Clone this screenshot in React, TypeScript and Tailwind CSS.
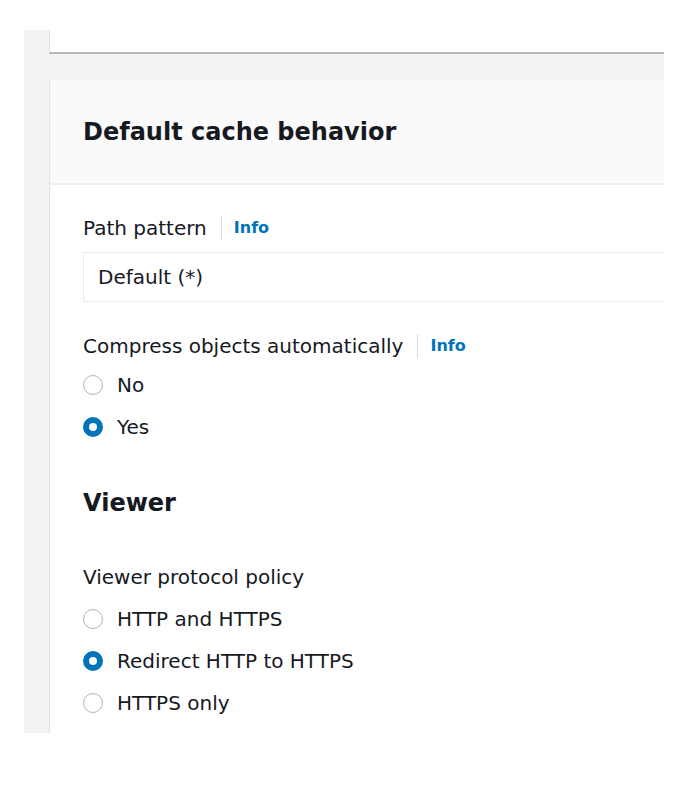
import React from 'react';

const font = { fontFamily: '"DejaVu Sans", "Liberation Sans", sans-serif' };

function Radio({ label, checked }: { label: string; checked?: boolean }) {
  return (
    <div className="flex items-center h-[24px]">
      <span
        className={
          checked
            ? 'w-[20px] h-[20px] rounded-full border-[6px] border-[#0073bb] bg-white shrink-0'
            : 'w-[20px] h-[20px] rounded-full border-[1.5px] border-[#aab7b8] bg-white shrink-0'
        }
      />
      <span className="ml-[14px] text-[20px] text-[#16191f]">{label}</span>
    </div>
  );
}

function FieldLabel({ text, info }: { text: string; info?: boolean }) {
  return (
    <div className="flex items-center h-[24px] text-[20px] text-[#16191f]">
      <span>{text}</span>
      {info && (
        <>
          <span className="ml-[14px] mr-[12px] w-px h-[24px] bg-[#d5dbdb]" />
          <span className="text-[16px] font-bold text-[#0073bb]">Info</span>
        </>
      )}
    </div>
  );
}

export default function App() {
  return (
    <div className="w-[696px] h-[802px] bg-white pt-[30px] pl-[24px] pr-[32px]" style={font}>
      <div className="h-[703px] bg-[#f2f3f3] pl-[25px] flex flex-col overflow-hidden">
        {/* previous card, cut off at the top */}
        <div className="h-[24px] bg-white border-l border-[#e3e5e5] border-b-2 border-b-[#b4b9b9]" />

        <div className="mt-[26px] flex-1 bg-white border-l border-[#e3e5e5] flex flex-col">
          <div className="h-[105px] bg-[#fafafa] border-b-2 border-[#eeeeee] flex items-center px-[33px]">
            <h2 className="text-[24px] font-bold text-[#16191f]">Default cache behavior</h2>
          </div>

          <div className="pl-[33px] pt-[31px] flex flex-col">
            <FieldLabel text="Path pattern" info />
            <div className="mt-[12px] h-[50px] border border-r-0 border-[#eaeded] flex items-center px-[14px] text-[20px] text-[#16191f]">
              Default (*)
            </div>

            <div className="mt-[32px]">
              <FieldLabel text="Compress objects automatically" info />
            </div>
            <div className="mt-[15px] flex flex-col gap-[18px]">
              <Radio label="No" />
              <Radio label="Yes" checked />
            </div>

            <h3 className="mt-[49px] h-[30px] flex items-center text-[24px] font-bold text-[#16191f]">Viewer</h3>

            <div className="mt-[47px]">
              <FieldLabel text="Viewer protocol policy" />
            </div>
            <div className="mt-[18px] flex flex-col gap-[18px]">
              <Radio label="HTTP and HTTPS" />
              <Radio label="Redirect HTTP to HTTPS" checked />
              <Radio label="HTTPS only" />
            </div>
          </div>
        </div>
      </div>
    </div>
  );
}
